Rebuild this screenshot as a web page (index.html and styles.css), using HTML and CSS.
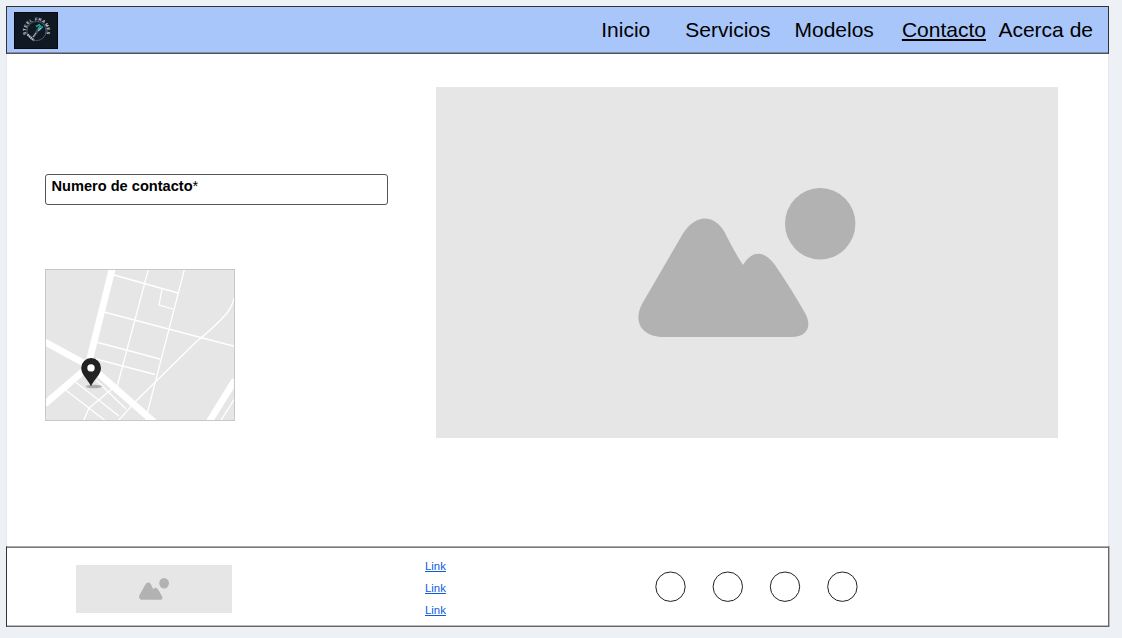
FILE: index.html
```html
<!DOCTYPE html>
<html lang="es">
<head>
<meta charset="utf-8">
<title>Contacto</title>
<link rel="stylesheet" href="styles.css">
</head>
<body>
<div class="page">
  <header class="header">
    <svg class="logo" viewBox="0 0 44 37">
      <rect width="44" height="37" fill="#101824"/>
      <rect x=".5" y=".5" width="43" height="36" fill="none" stroke="#05090f"/>
      <defs><path id="arc" d="M12.700 22.500A10.400 10.400 0 1 1 32.300 22.500"/></defs>
      <circle cx="22.500" cy="19" r="9.600" fill="none" stroke="#8d959b" stroke-width=".5"/>
      <text class="logo-text" textLength="39"><textPath href="#arc">STEEL FRAMES</textPath></text>
      <path d="M13.500 22.500l6.500 6" stroke="#c2c8cc" stroke-width="2.200" stroke-dasharray="1.500 .6"/>
      <path d="M18 25l5-8 3-4 2 1-3 5-5 7z" fill="#46525b"/>
      <path d="M22 14.500l4-2m1 1l-3 4m1 1l4-4" fill="none" stroke="#22a99d" stroke-width="1.400"/>
      <path d="M19 25l3-4M24 19l3-3" stroke="#aab3b8" stroke-width="1"/>
    </svg>
    <nav class="nav">
      <a class="nav-link">Inicio</a>
      <a class="nav-link nav-services">Servicios</a>
      <a class="nav-link nav-models">Modelos</a>
      <a class="nav-link nav-contact active">Contacto</a>
      <a class="nav-link nav-about">Acerca de</a>
    </nav>
  </header>
  <main class="main">
    <section class="contact">
      <div class="field">Numero de contacto<span class="required">*</span></div>
      <svg class="map" viewBox="0 0 190 152">
        <rect width="190" height="152" fill="#e6e6e6"/>
        <g fill="none" stroke="#fff">
          <path stroke-width="6.800" d="M67.200 0L44 93M0 73L46 98L109 153M43 98L0 135M190 111L164 153"/>
          <path stroke-width="1.300" d="M69 6L133 24M59 43L190 77.500M51 73L115 90M51 90L110 105.500M103.500 0L72 118M139.500 0L100 153M117 20L114 36L128 40M190 26Q188 36 182 44Q170 58 151 73L92 131L72 153M18 119L62 153M28 111L74 147M51 111L81 140M67 120L44 139L38 153M190 129L175 153"/>
        </g>
        <rect x=".5" y=".5" width="189" height="151" fill="none" stroke="#c8c8c8"/>
        <ellipse cx="49" cy="117.500" rx="8" ry="1.800" fill="#000" opacity=".25"/>
        <path fill="#222" fill-rule="evenodd" d="M46 117.200C43 110.500 36.200 105.500 36.200 98.900a9.900 9.900 0 0 1 19.800 0C56 105.500 49 110.500 46 117.200ZM46 95.200a3.700 3.700 0 1 0 0 7.400a3.700 3.700 0 0 0 0-7.400Z"/>
      </svg>
    </section>
    <div class="picture">
      <svg class="picture-icon" viewBox="0 0 218 150">
        <path d="M4 116L45 45.500C58 26 75 26 86 43Q97 65 105 77C114 62 126 62 137 77Q154 102 167 125C175 139 168 149 154 149H26C6 149 -6 136 4 116Z"/>
        <ellipse cx="182.200" cy="35.700" rx="35.200" ry="35.700"/>
      </svg>
    </div>
  </main>
  <footer class="footer">
    <div class="footer-picture">
      <svg class="footer-icon" viewBox="0 0 218 150" preserveAspectRatio="none">
        <path d="M4 116L45 45.500C58 26 75 26 86 43Q97 65 105 77C114 62 126 62 137 77Q154 102 167 125C175 139 168 149 154 149H26C6 149 -6 136 4 116Z"/>
        <ellipse cx="182.200" cy="35.700" rx="35.200" ry="35.700"/>
      </svg>
    </div>
    <div class="links">
      <a class="link">Link</a>
      <a class="link">Link</a>
      <a class="link">Link</a>
    </div>
    <svg class="dots" viewBox="0 0 204 32">
      <g fill="#fff" stroke="#222" stroke-width="1">
        <circle cx="15.500" cy="15.700" r="14.700"/>
        <circle cx="72.800" cy="15.700" r="14.700"/>
        <circle cx="130" cy="15.700" r="14.700"/>
        <circle cx="187.400" cy="15.700" r="14.700"/>
      </g>
    </svg>
  </footer>
</div>
</body>
</html>
```
FILE: styles.css
```css
* { box-sizing: border-box; }
body {
  margin: 0;
  height: 638px;
  padding: 6px 0 0 6px;
  overflow: hidden;
  background: #edf0f5;
  font-family: "Liberation Sans", Arial, sans-serif;
  color: #000;
}
.page { width: 1103px; }
.header {
  display: flex;
  justify-content: space-between;
  height: 48px;
  padding: 5px 15px 0 7px;
  background: #a8c6fa;
  border: 1px solid #333;
  border-bottom-color: #555;
  box-shadow: inset 0 -1px #7b8cac;
}
.logo { width: 44px; height: 37px; }
.logo-text { font-size: 4.4px; font-weight: bold; fill: #d5dade; }
.nav { display: flex; padding-top: 6px; }
.nav-link { font-size: 21px; line-height: 24px; white-space: nowrap; }
.nav-services { margin-left: 35px; }
.nav-models { margin-left: 24px; }
.nav-contact { margin-left: 28px; }
.nav-about { margin-left: 12.5px; }
.active { text-decoration: underline; text-decoration-thickness: 2px; text-underline-offset: 2px; }
.main {
  display: flex;
  justify-content: space-between;
  width: 1103px;
  height: 492px;
  padding: 33px 50px 0 38px;
  background: #fff;
  border: 1px solid #e4e8ee;
  border-width: 0 1px;
}
.contact { padding-top: 87px; }
.field {
  width: 343px;
  height: 31px;
  padding: 3px 0 0 5.5px;
  border: 1px solid #555;
  border-radius: 3px;
  font-size: 14.600px;
  line-height: 16px;
  font-weight: bold;
}
.required { font-weight: normal; }
.map { display: block; width: 190px; height: 152px; margin-top: 64px; }
.picture {
  width: 622px;
  height: 351px;
  padding: 101px 0 0 202px;
  background: #e6e6e6;
}
.picture-icon { display: block; width: 218px; height: 150px; fill: #b2b2b2; }
.footer {
  display: flex;
  height: 81px;
  padding: 18px 0 0 69px;
  background: #fff;
  border: 1px solid #666;
  border-top-color: #aaa;
  border-left-color: #333;
  box-shadow: inset 0 1px #777, inset 0 -1px #bbb, 1px 0 #bbb;
}
.footer-picture {
  width: 156px;
  height: 48px;
  padding: 13px 0 0 63px;
  background: #e6e6e6;
}
.footer-icon { display: block; width: 30px; height: 22px; fill: #b2b2b2; }
.links { display: flex; flex-direction: column; width: 230px; margin: -10px 0 0 193px; }
.link {
  height: 22px;
  font-size: 11.400px;
  line-height: 22px;
  color: #0b5cde;
  text-decoration: underline;
  text-underline-offset: 1px;
}
.dots { width: 204px; height: 32px; margin-top: 6px; }
```
